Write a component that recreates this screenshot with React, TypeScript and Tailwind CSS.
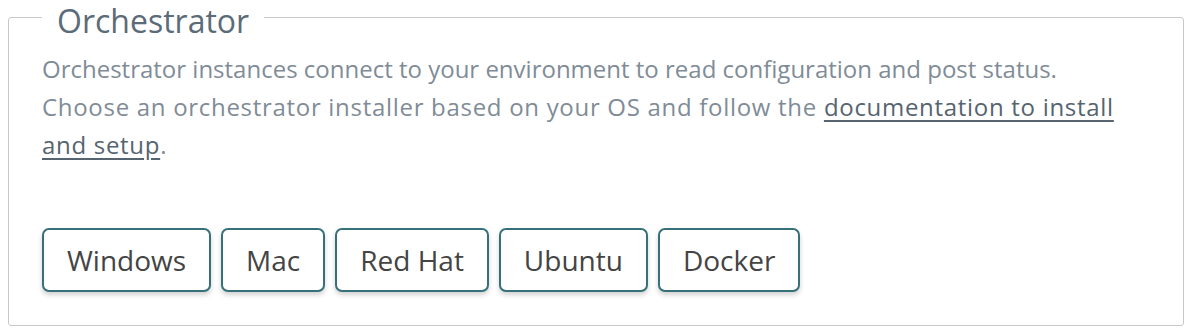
const installers = ['Windows', 'Mac', 'Red Hat', 'Ubuntu', 'Docker'];

export default function App() {
  return (
    <div className="bg-white w-[1199px] h-[333px] pl-[8px] font-['Open_Sans',sans-serif]">
      <fieldset className="w-[1176px] h-[326px] border border-[#c6cacd] rounded-[3px] px-[33px]">
        <legend className="px-[15px] text-[32px] leading-[34px] text-[#5b6b78]">
          <span className="relative top-[4px]">Orchestrator</span>
        </legend>
        <div className="mt-[16px] text-[24px] leading-[38px] text-[#7f8c97]">
          <p>Orchestrator instances connect to your environment to read configuration and post status.</p>
          <p className="tracking-[0.7px]">
            Choose an orchestrator installer based on your OS and follow the{' '}
            <a href="#" className="underline text-[#56646f] underline-offset-[4px]">
              documentation to install and setup
            </a>
            .
          </p>
        </div>
        <div className="flex gap-[10px] mt-[64px]">
          {installers.map((name) => (
            <button
              key={name}
              className="h-[64px] px-[23px] border-2 border-[#35707b] rounded-[7px] bg-white text-[28px] text-[#444] shadow-[0_3px_5px_rgba(0,0,0,0.18)]"
            >
              {name}
            </button>
          ))}
        </div>
      </fieldset>
    </div>
  );
}
